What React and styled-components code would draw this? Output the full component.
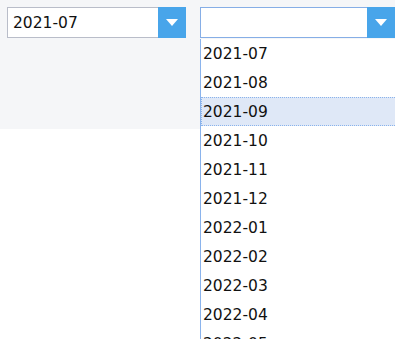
import React from "react";
import styled, { createGlobalStyle } from "styled-components";

const Global = createGlobalStyle`
  html, body { margin: 0; padding: 0; background: #ffffff; }
  html { height: 100%; overflow: hidden; }
  body { min-height: 339px; height: 100%; font-family: "DejaVu Sans", sans-serif; }
`;

const Bar = styled.div`
  height: 129px;
  box-sizing: border-box;
  background: #f5f6f8;
  padding: 7px 7px;
  display: flex;
  align-items: flex-start;
  gap: 14px;
`;

const SelectWrap = styled.div`
  position: relative;
  width: ${(p) => p.$w}px;
  flex: none;
`;

const Field = styled.div`
  height: 31px;
  box-sizing: border-box;
  display: flex;
  background: #ffffff;
  border: 1px solid ${(p) => (p.$focus ? "#86aee6" : "#b9bdc9")};
`;

const Value = styled.div`
  flex: 1;
  display: flex;
  align-items: center;
  padding-left: 5px;
  font-family: "DejaVu Sans", sans-serif;
  font-size: 15.5px;
  color: #111;
`;

const Btn = styled.div`
  width: 28px;
  background: #48a5ea;
  display: flex;
  align-items: center;
  justify-content: center;
  margin: -1px -1px -1px 0;
`;

const List = styled.div`
  position: absolute;
  top: 32px;
  left: 0;
  width: calc(100% + 4px);
  background: #ffffff;
  border-left: 1px solid #8ab3ec;
  box-sizing: border-box;
  z-index: 2;
`;

const Item = styled.div`
  height: 29px;
  box-sizing: border-box;
  display: flex;
  align-items: center;
  padding-left: 1px;
  font-family: "DejaVu Sans", sans-serif;
  font-size: 15.5px;
  color: #111;
  background: ${(p) => (p.$active ? "#dfe8f7" : "transparent")};
  border: 1px dotted ${(p) => (p.$active ? "#8ab3ec" : "transparent")};
`;

const Arrow = () => (
  <svg width="12" height="7" viewBox="0 0 12 7">
    <path d="M0 0 H12 L6 7 Z" fill="#ffffff" />
  </svg>
);

const items = [
  "2021-07", "2021-08", "2021-09", "2021-10", "2021-11", "2021-12",
  "2022-01", "2022-02", "2022-03", "2022-04", "2022-05",
];

export default function App() {
  return (
    <>
      <Global />
      <Bar>
        <SelectWrap $w={179}>
          <Field>
            <Value>2021-07</Value>
            <Btn><Arrow /></Btn>
          </Field>
        </SelectWrap>
        <SelectWrap $w={195}>
          <Field $focus>
            <Value />
            <Btn><Arrow /></Btn>
          </Field>
          <List>
            {items.map((t, i) => (
              <Item key={t} $active={i === 2}>{t}</Item>
            ))}
          </List>
        </SelectWrap>
      </Bar>
    </>
  );
}
